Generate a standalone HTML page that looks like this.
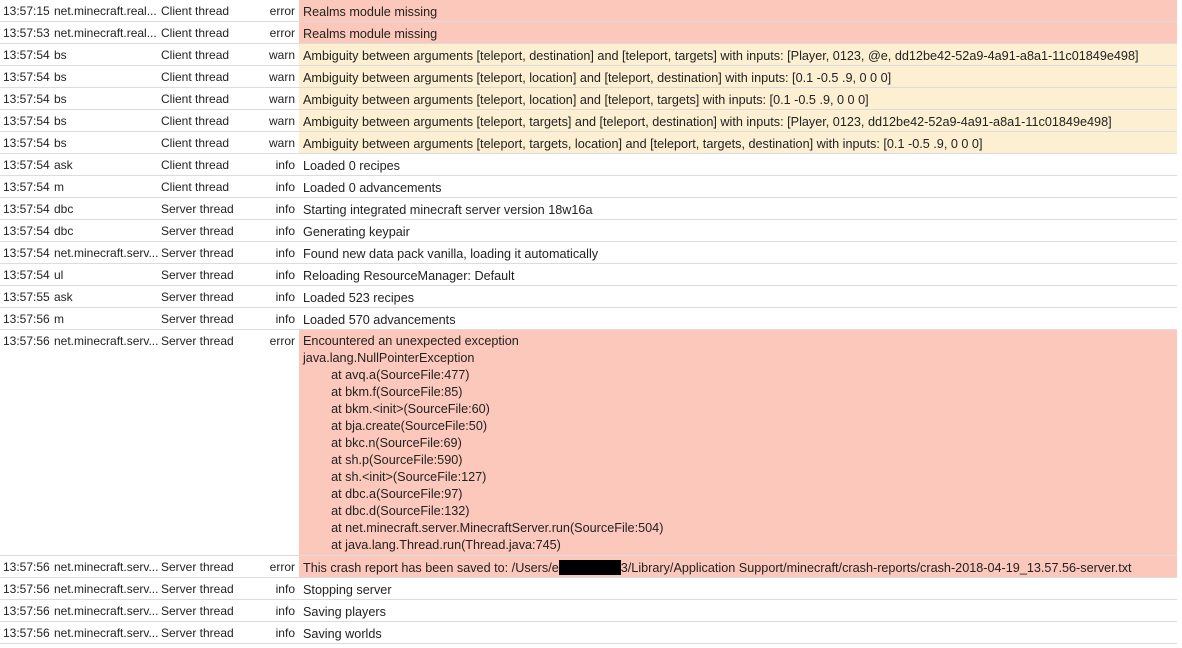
<!DOCTYPE html><html><head><style>
body{margin:0;background:#fff;font-family:"Liberation Sans",sans-serif;font-size:12px;color:#222;width:1182px;height:648px;overflow:hidden}
.r{position:relative;height:21px;border-bottom:1px solid #dcdcdc;width:1177px}
.r span{position:absolute;top:4px;white-space:nowrap}
.t{left:3px}.s{left:54px}.th{left:161px}.l{right:882px}
.m{position:absolute;left:299px;top:0;bottom:0;right:0;padding:4px 0 0 4px;white-space:pre;line-height:17px;font-size:12.65px}
.e .m{background:#fcc8bb}.w .m{background:#fdefd2}
.big{height:225px}.big .m{padding-top:3px}
</style></head><body>
<div class="r e"><span class="t">13:57:15</span><span class="s">net.minecraft.real...</span><span class="th">Client thread</span><span class="l">error</span><div class="m">Realms module missing</div></div>
<div class="r e"><span class="t">13:57:53</span><span class="s">net.minecraft.real...</span><span class="th">Client thread</span><span class="l">error</span><div class="m">Realms module missing</div></div>
<div class="r w"><span class="t">13:57:54</span><span class="s">bs</span><span class="th">Client thread</span><span class="l">warn</span><div class="m">Ambiguity between arguments [teleport, destination] and [teleport, targets] with inputs: [Player, 0123, @e, dd12be42-52a9-4a91-a8a1-11c01849e498]</div></div>
<div class="r w"><span class="t">13:57:54</span><span class="s">bs</span><span class="th">Client thread</span><span class="l">warn</span><div class="m">Ambiguity between arguments [teleport, location] and [teleport, destination] with inputs: [0.1 -0.5 .9, 0 0 0]</div></div>
<div class="r w"><span class="t">13:57:54</span><span class="s">bs</span><span class="th">Client thread</span><span class="l">warn</span><div class="m">Ambiguity between arguments [teleport, location] and [teleport, targets] with inputs: [0.1 -0.5 .9, 0 0 0]</div></div>
<div class="r w"><span class="t">13:57:54</span><span class="s">bs</span><span class="th">Client thread</span><span class="l">warn</span><div class="m">Ambiguity between arguments [teleport, targets] and [teleport, destination] with inputs: [Player, 0123, dd12be42-52a9-4a91-a8a1-11c01849e498]</div></div>
<div class="r w"><span class="t">13:57:54</span><span class="s">bs</span><span class="th">Client thread</span><span class="l">warn</span><div class="m">Ambiguity between arguments [teleport, targets, location] and [teleport, targets, destination] with inputs: [0.1 -0.5 .9, 0 0 0]</div></div>
<div class="r"><span class="t">13:57:54</span><span class="s">ask</span><span class="th">Client thread</span><span class="l">info</span><div class="m">Loaded 0 recipes</div></div>
<div class="r"><span class="t">13:57:54</span><span class="s">m</span><span class="th">Client thread</span><span class="l">info</span><div class="m">Loaded 0 advancements</div></div>
<div class="r"><span class="t">13:57:54</span><span class="s">dbc</span><span class="th">Server thread</span><span class="l">info</span><div class="m">Starting integrated minecraft server version 18w16a</div></div>
<div class="r"><span class="t">13:57:54</span><span class="s">dbc</span><span class="th">Server thread</span><span class="l">info</span><div class="m">Generating keypair</div></div>
<div class="r"><span class="t">13:57:54</span><span class="s">net.minecraft.serv...</span><span class="th">Server thread</span><span class="l">info</span><div class="m">Found new data pack vanilla, loading it automatically</div></div>
<div class="r"><span class="t">13:57:54</span><span class="s">ul</span><span class="th">Server thread</span><span class="l">info</span><div class="m">Reloading ResourceManager: Default</div></div>
<div class="r"><span class="t">13:57:55</span><span class="s">ask</span><span class="th">Server thread</span><span class="l">info</span><div class="m">Loaded 523 recipes</div></div>
<div class="r"><span class="t">13:57:56</span><span class="s">m</span><span class="th">Server thread</span><span class="l">info</span><div class="m">Loaded 570 advancements</div></div>
<div class="r e big"><span class="t">13:57:56</span><span class="s">net.minecraft.serv...</span><span class="th">Server thread</span><span class="l">error</span><div class="m">Encountered an unexpected exception
java.lang.NullPointerException
        at avq.a(SourceFile:477)
        at bkm.f(SourceFile:85)
        at bkm.&lt;init&gt;(SourceFile:60)
        at bja.create(SourceFile:50)
        at bkc.n(SourceFile:69)
        at sh.p(SourceFile:590)
        at sh.&lt;init&gt;(SourceFile:127)
        at dbc.a(SourceFile:97)
        at dbc.d(SourceFile:132)
        at net.minecraft.server.MinecraftServer.run(SourceFile:504)
        at java.lang.Thread.run(Thread.java:745)</div></div>
<div class="r e"><span class="t">13:57:56</span><span class="s">net.minecraft.serv...</span><span class="th">Server thread</span><span class="l">error</span><div class="m">This crash report has been saved to: /Users/e<b style="display:inline-block;width:62px;height:15px;background:#000;vertical-align:-3px"></b>3/Library/Application Support/minecraft/crash-reports/crash-2018-04-19_13.57.56-server.txt</div></div>
<div class="r"><span class="t">13:57:56</span><span class="s">net.minecraft.serv...</span><span class="th">Server thread</span><span class="l">info</span><div class="m">Stopping server</div></div>
<div class="r"><span class="t">13:57:56</span><span class="s">net.minecraft.serv...</span><span class="th">Server thread</span><span class="l">info</span><div class="m">Saving players</div></div>
<div class="r"><span class="t">13:57:56</span><span class="s">net.minecraft.serv...</span><span class="th">Server thread</span><span class="l">info</span><div class="m">Saving worlds</div></div>
</body></html>
